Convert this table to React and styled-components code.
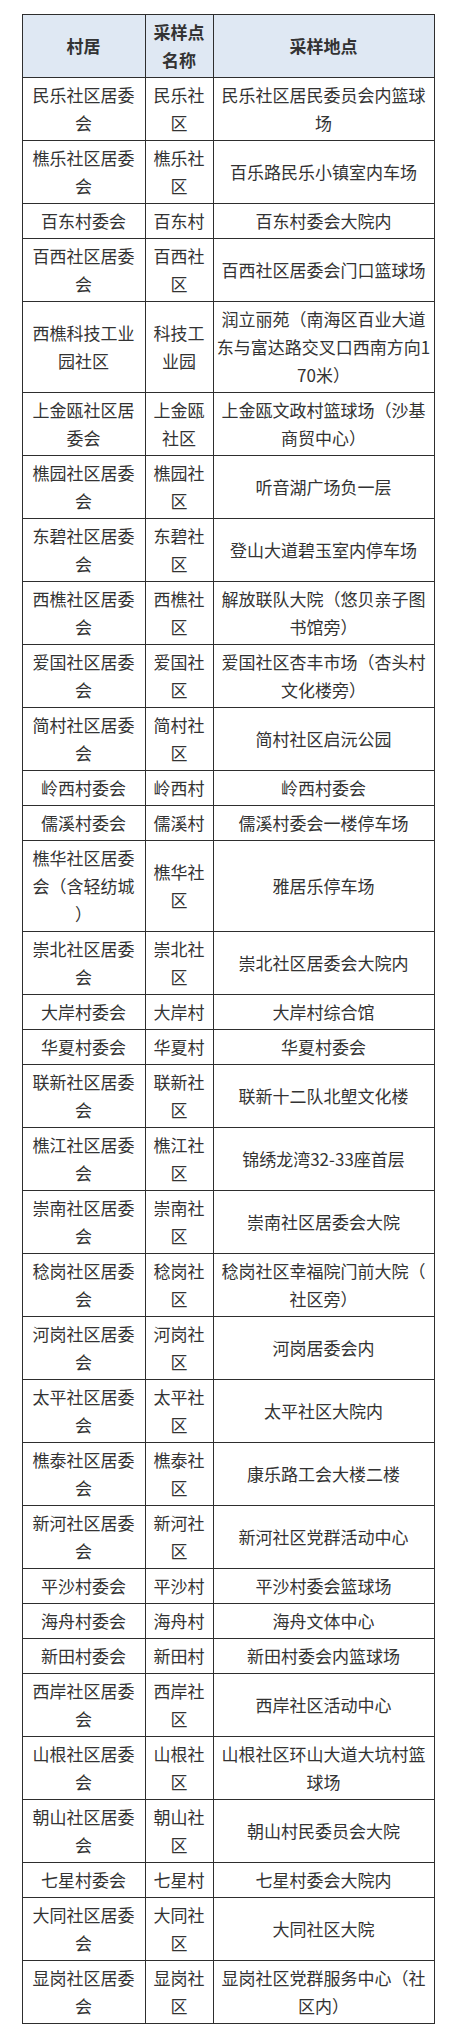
import React from 'react';
import styled, { createGlobalStyle } from 'styled-components';

const GlobalStyle = createGlobalStyle`
  body {
    margin: 0;
    background: #ffffff;
    font-family: "Noto Sans CJK SC", "Noto Sans", sans-serif;
  }
`;

const Page = styled.div`
  padding: 14px 22px 19px;
  display: flex;
  justify-content: center;
`;

const Table = styled.table`
  width: 412px;
  table-layout: fixed;
  border-collapse: collapse;
  border: 1px solid #2e2e2e;
  color: #333333;
  font-size: 17px;
  line-height: 28px;
`;

const HeadRow = styled.tr`
  background-color: #dfe8f3;
`;

const Th = styled.th`
  border: 1px solid #2e2e2e;
  padding: 3px 3px;
  font-weight: 700;
  text-align: center;
  vertical-align: middle;
  line-break: anywhere;
  word-break: break-all;
  text-spacing-trim: space-all;
`;

const Td = styled.td`
  border: 1px solid #2e2e2e;
  padding: 3px 3px;
  text-align: center;
  vertical-align: middle;
  line-break: anywhere;
  word-break: break-all;
  text-spacing-trim: space-all;
`;

const rows = [
  ['民乐社区居委会', '民乐社区', '民乐社区居民委员会内篮球场'],
  ['樵乐社区居委会', '樵乐社区', '百乐路民乐小镇室内车场'],
  ['百东村委会', '百东村', '百东村委会大院内'],
  ['百西社区居委会', '百西社区', '百西社区居委会门口篮球场'],
  ['西樵科技工业园社区', '科技工业园', '润立丽苑（南海区百业大道东与富达路交叉口西南方向170米）'],
  ['上金瓯社区居委会', '上金瓯社区', '上金瓯文政村篮球场（沙基商贸中心）'],
  ['樵园社区居委会', '樵园社区', '听音湖广场负一层'],
  ['东碧社区居委会', '东碧社区', '登山大道碧玉室内停车场'],
  ['西樵社区居委会', '西樵社区', '解放联队大院（悠贝亲子图书馆旁）'],
  ['爱国社区居委会', '爱国社区', '爱国社区杏丰市场（杏头村文化楼旁）'],
  ['简村社区居委会', '简村社区', '简村社区启沅公园'],
  ['岭西村委会', '岭西村', '岭西村委会'],
  ['儒溪村委会', '儒溪村', '儒溪村委会一楼停车场'],
  ['樵华社区居委会（含轻纺城）', '樵华社区', '雅居乐停车场'],
  ['崇北社区居委会', '崇北社区', '崇北社区居委会大院内'],
  ['大岸村委会', '大岸村', '大岸村综合馆'],
  ['华夏村委会', '华夏村', '华夏村委会'],
  ['联新社区居委会', '联新社区', '联新十二队北塱文化楼'],
  ['樵江社区居委会', '樵江社区', '锦绣龙湾32-33座首层'],
  ['崇南社区居委会', '崇南社区', '崇南社区居委会大院'],
  ['稔岗社区居委会', '稔岗社区', '稔岗社区幸福院门前大院（社区旁）'],
  ['河岗社区居委会', '河岗社区', '河岗居委会内'],
  ['太平社区居委会', '太平社区', '太平社区大院内'],
  ['樵泰社区居委会', '樵泰社区', '康乐路工会大楼二楼'],
  ['新河社区居委会', '新河社区', '新河社区党群活动中心'],
  ['平沙村委会', '平沙村', '平沙村委会篮球场'],
  ['海舟村委会', '海舟村', '海舟文体中心'],
  ['新田村委会', '新田村', '新田村委会内篮球场'],
  ['西岸社区居委会', '西岸社区', '西岸社区活动中心'],
  ['山根社区居委会', '山根社区', '山根社区环山大道大坑村篮球场'],
  ['朝山社区居委会', '朝山社区', '朝山村民委员会大院'],
  ['七星村委会', '七星村', '七星村委会大院内'],
  ['大同社区居委会', '大同社区', '大同社区大院'],
  ['显岗社区居委会', '显岗社区', '显岗社区党群服务中心（社区内）'],
];

const App = () => (
  <Page>
    <GlobalStyle />
    <Table>
      <colgroup>
        <col style={{ width: 123 }} />
        <col style={{ width: 68 }} />
        <col style={{ width: 221 }} />
      </colgroup>
      <thead>
        <HeadRow>
          <Th>村居</Th>
          <Th>采样点名称</Th>
          <Th>采样地点</Th>
        </HeadRow>
      </thead>
      <tbody>
        {rows.map(([village, point, place]) => (
          <tr key={village}>
            <Td>{village}</Td>
            <Td>{point}</Td>
            <Td>{place}</Td>
          </tr>
        ))}
      </tbody>
    </Table>
  </Page>
);

export default App;
